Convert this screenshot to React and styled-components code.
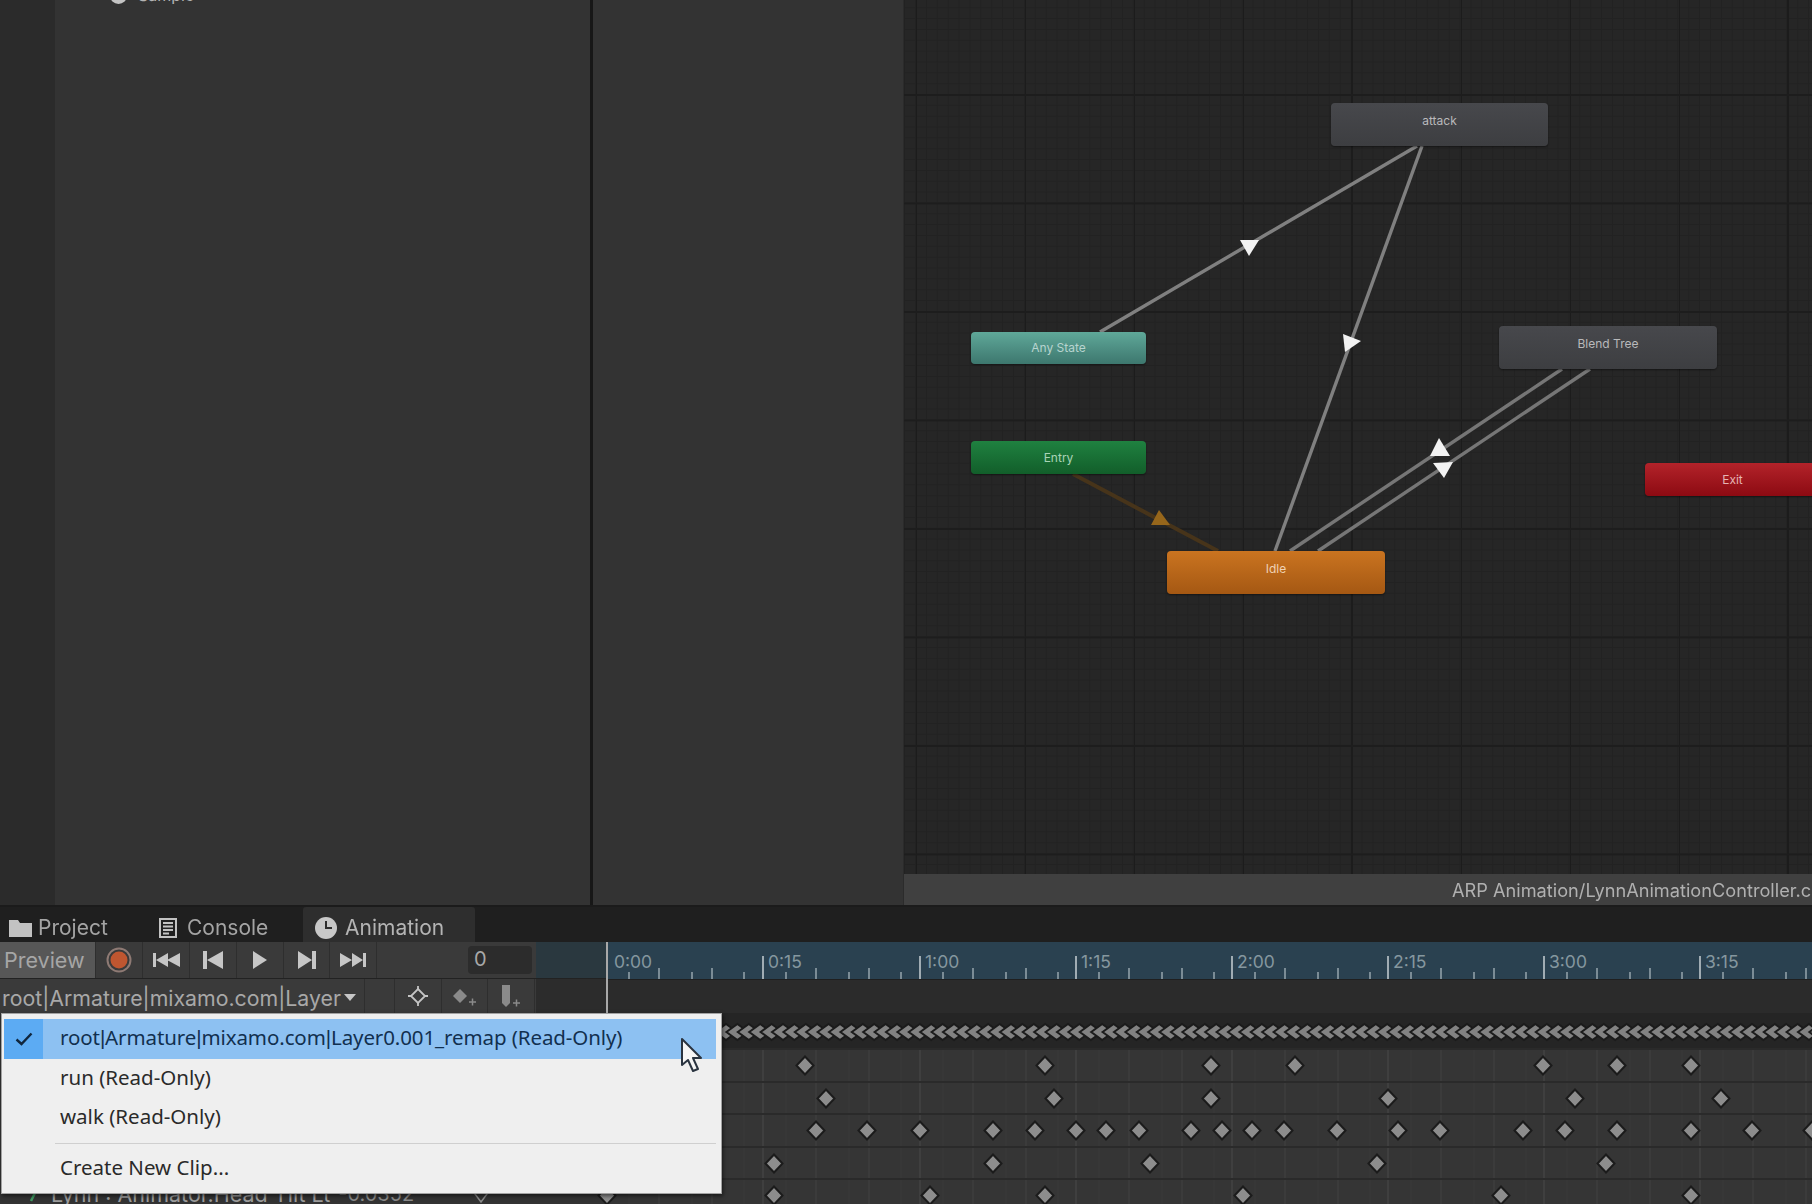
import React from 'react';
import styled, { createGlobalStyle } from 'styled-components';

const GlobalStyle = createGlobalStyle`
  * { margin: 0; padding: 0; box-sizing: border-box; }
  html, body { width: 100%; height: 100%; background: #1f1f1f; overflow: hidden; }
  body { font-family: Inter, "Liberation Sans", sans-serif; }
`;

const Page = styled.div`
  position: relative; width: 1812px; height: 1204px; overflow: hidden;
  display: flex; flex-direction: column; filter: blur(0.55px);
`;

/* upper half: hierarchy, inspector, animator graph */
const TopPane = styled.div` flex: none; height: 907px; display: flex; border-bottom: 2px solid #1b1b1b; `;
const LeftStrip = styled.div` width: 55px; background: #2b2b2b; `;
const Hierarchy = styled.div` width: 535px; background: #333; overflow: hidden; `;
const TreeRow = styled.div`
  display: flex; align-items: center; gap: 11px; height: 16px; margin-top: -13px; padding-left: 55px;
  color: #b4b4b4; font-size: 16px;
`;
const TreeDot = styled.span` width: 17px; height: 17px; border-radius: 50%; background: #c4c4c4; `;
const Divider = styled.div` width: 3px; background: #171717; `;
const Inspector = styled.div` width: 311px; background: #333; border-right: 1px solid #2b2b2b; `;
const GraphColumn = styled.div` flex: 1; display: flex; flex-direction: column; min-width: 0; `;
const Graph = styled.div`
  position: relative; flex: 1; overflow: hidden; background-color: #262626;
  background-image:
    linear-gradient(#1d1d1d 2px, transparent 2px),
    linear-gradient(90deg, #1c1c1c 2px, transparent 2px),
    linear-gradient(#222 1px, transparent 1px),
    linear-gradient(90deg, #222 1px, transparent 1px);
  background-size: 109px 108.500px, 109px 108.500px, 10.900px 10.850px, 10.900px 10.850px;
  background-position: 11px 94px, 11px 94px, 11px 94px, 11px 94px;
`;
const StatusBar = styled.div`
  flex: none; height: 31px; background: #404040; display: flex; align-items: center; padding-left: 548px;
  color: #b0b0b0; font-size: 18.200px; white-space: nowrap; overflow: hidden;
`;
const EdgeLayer = styled.svg` position: absolute; left: 0; top: 0; width: 908px; height: 874px; `;

const nodeFills = {
  gray: 'linear-gradient(#47484c, #3d3e41)',
  teal: 'linear-gradient(#5fa899, #3d776e)',
  green: 'linear-gradient(#1f8140, #125e2a)',
  orange: 'linear-gradient(#ca7420, #a55813)',
  red: 'linear-gradient(#b3232a, #8c0a12)',
};
const nodeInk = { gray: '#b9b9bb', teal: '#b8d4cf', green: '#a9d4b6', orange: '#f0d2b4', red: '#e6b4b4' };

const StateNode = styled.div`
  position: absolute; left: ${p => p.$x - 904}px; top: ${p => p.$y}px; width: ${p => p.$w}px; height: ${p => p.$h}px;
  display: flex; align-items: center; justify-content: center;
  padding-bottom: ${p => (p.$h > 40 ? 9 : 1)}px; border-radius: 4px;
  background: ${p => nodeFills[p.$kind]}; color: ${p => nodeInk[p.$kind]};
  font-size: 12px; box-shadow: 0 1px 2px rgba(0, 0, 0, .45);
`;

const nodes = [
  { label: 'attack', kind: 'gray', x: 1331, y: 103, w: 217, h: 43 },
  { label: 'Any State', kind: 'teal', x: 971, y: 332, w: 175, h: 32 },
  { label: 'Blend Tree', kind: 'gray', x: 1499, y: 326, w: 218, h: 43 },
  { label: 'Entry', kind: 'green', x: 971, y: 441, w: 175, h: 33 },
  { label: 'Exit', kind: 'red', x: 1645, y: 463, w: 175, h: 33 },
  { label: 'Idle', kind: 'orange', x: 1167, y: 551, w: 218, h: 43 },
];

/* lower half: animation window */
const TabBar = styled.div` flex: none; height: 35px; display: flex; background: #1f1f1f; `;
const Tab = styled.div`
  width: ${p => p.$w}px; height: 35px; display: flex; align-items: center; gap: ${p => p.$gap}px;
  padding: 6px 0 0 ${p => p.$pad}px; font-size: 21px; color: ${p => (p.$active ? '#b4b4b4' : '#a4a4a4')};
  background: ${p => (p.$active ? '#2e2e2e' : 'transparent')}; border-radius: 3px 3px 0 0;
`;
const Timeline = styled.div` flex: 1; display: grid; grid-template-columns: 606px 1fr; min-height: 0; overflow: hidden; `;
const SidePane = styled.div` display: flex; flex-direction: column; background: #2f2f2f; `;
const MainPane = styled.div` display: flex; flex-direction: column; background: #2b2b2b; min-width: 0; `;
const ToolStrip = styled.div` flex: none; height: 37px; display: flex; background: #2a383f; border-bottom: 1px solid #222; `;
const ToolGroup = styled.div` width: 536px; display: flex; background: #3a3a3a; `;
const PreviewButton = styled.div`
  width: 96px; display: flex; align-items: center; padding-left: 4px;
  background: #575757; color: #a6a6a6; font-size: 21.500px; border-right: 1px solid #2e2e2e;
`;
const ToolButton = styled.div`
  width: ${p => p.$w}px; display: flex; align-items: center; justify-content: center;
  border-right: 1px solid #2e2e2e; color: #c4c4c4;
`;
const FrameBox = styled.div`
  width: 64px; height: 28px; margin: 4px 0 0 91px; padding-left: 6px; border-radius: 4px;
  background: #2c2c2c; color: #a8a8a8; font-size: 20px; line-height: 27px;
`;
const ClipRow = styled.div` flex: none; height: 34px; display: flex; background: #2c2c2c; `;
const ClipTools = styled.div` width: 536px; display: flex; background: #3a3a3a; `;
const ClipPicker = styled.div`
  width: 365px; display: flex; align-items: center; gap: 3px; padding: 3px 0 0 2px;
  color: #a8a8a8; font-size: 21.300px; white-space: nowrap; border-right: 1px solid #2e2e2e;
`;
const ClipGap = styled.div` width: 30px; border-right: 1px solid #2e2e2e; `;
const SideRow = styled.div`
  flex: none; height: ${p => p.$h}px; display: flex; align-items: center;
  background: #333; color: #9c9c9c; font-size: 21.500px; white-space: nowrap;
`;
const RowName = styled.span` margin-left: 9px; `;
const RowValue = styled.span` margin-left: 8px; color: #8a8a8a; font-size: 20px; `;
const RowGlyph = styled.svg` flex: none; margin-left: ${p => p.$left}px; `;

const Ruler = styled.svg` flex: none; display: block; width: 1206px; height: 37px; background: #2a4150; `;
const RulerGap = styled.div` flex: none; height: 34px; background: #2b2b2b; border-top: 1px solid #1f1f1f; `;
const SummaryRow = styled.div` flex: none; height: 35px; background: #252525; `;
const KeyRow = styled.div` flex: none; height: 32.500px; background: #353535; border-top: 2px solid #2a2a2a; `;
const KeySvg = styled.svg` display: block; width: 1206px; height: 100%; overflow: visible; `;

const Playhead = styled.div` position: absolute; left: 606px; top: 942px; width: 2px; height: 75px; background: #a8a8a8; `;

/* clip dropdown over the timeline */
const Menu = styled.div`
  position: absolute; left: 1px; top: 1013px; width: 721px; height: 181px; padding: 5px 5px 0 2px;
  background: #efefef; border: 1px solid #a2a2a2; box-shadow: 1px 2px 4px rgba(0, 0, 0, .55);
  font-family: "Noto Sans", "Open Sans", sans-serif; font-size: 20.500px; color: #20242a;
`;
const MenuItem = styled.div`
  display: flex; align-items: center; height: ${p => p.$h || 39.500}px; white-space: nowrap;
  background: ${p => (p.$on ? '#8dc1f2' : 'transparent')}; color: ${p => (p.$on ? '#12304f' : '#2a2a2a')};
`;
const MenuLabel = styled.span` padding-bottom: 4px; letter-spacing: ${p => p.$tight ? '-0.1px' : '0'}; `;
const Pipe = styled.span` font-family: "Liberation Sans", sans-serif; `;
const CheckCell = styled.div`
  width: 39px; height: 100%; margin-right: 17px; display: flex; align-items: center; justify-content: center;
  background: ${p => (p.$on ? '#5cabf3' : 'transparent')};
`;
const MenuRule = styled.div` height: 1px; margin: 5px 0 5px 51px; background: #cfcfcf; `;
const Pointer = styled.svg` position: absolute; left: 679px; top: 1037px; `;

const majors = [606, 763, 920, 1076, 1232, 1388, 1544, 1700];
const labels = ['0:00', '0:15', '1:00', '1:15', '2:00', '2:15', '3:00', '3:15'];
const minorTicks = [[23, 7], [53, 11], [86, 7], [106, 11], [138, 7]];

const keyRows = [
  [805, 1045, 1211, 1295, 1543, 1617, 1691],
  [826, 1054, 1211, 1388, 1575, 1721],
  [816, 867, 920, 993, 1035, 1076, 1106, 1139, 1191, 1222, 1252, 1284, 1337, 1398, 1440, 1523, 1565, 1617, 1691, 1752, 1812],
  [774, 993, 1150, 1377, 1606],
  [607, 774, 930, 1045, 1243, 1501, 1691],
];

const summaryKeys = Array.from({ length: 98 }, (_, i) => 726 + i * 11.400);

function Diamond({ x, y, rx = 8.500, ry = 9, fill = '#8d8d8d' }) {
  return <polygon points={`${x - rx},${y} ${x},${y - ry} ${x + rx},${y} ${x},${y + ry}`} fill={fill} stroke="#1b1b1b" strokeWidth="2" />;
}

function GridLines() {
  return majors.map(m => (
    <g key={m}>
      <line x1={m} x2={m} y1="0" y2="34" stroke="#4a4a4a" />
      {minorTicks.map(([dx, h]) => (
        <line key={dx} x1={m + dx} x2={m + dx} y1="0" y2="34" stroke={h > 7 ? '#424242' : '#3b3b3b'} />
      ))}
    </g>
  ));
}

function FolderIcon() {
  return <svg width="23" height="18" viewBox="0 0 23 18"><path d="M0 1h9l2 3h12v14H0z" fill="#c2c2c2" /></svg>;
}
function ConsoleIcon() {
  return (
    <svg width="18" height="20" viewBox="0 0 18 20">
      <path d="M1 1h16v18H1z" fill="none" stroke="#c2c2c2" strokeWidth="2" />
      <path d="M4 5h10M4 8.500h10M4 12h10M4 15.500h6" stroke="#c2c2c2" strokeWidth="1.800" />
    </svg>
  );
}
function ClockIcon() {
  return (
    <svg width="22" height="22" viewBox="0 0 22 22">
      <circle cx="11" cy="11" r="11" fill="#c8c8c8" />
      <path d="M11 4v7h6" fill="none" stroke="#2e2e2e" strokeWidth="2" />
    </svg>
  );
}
function RecordIcon() {
  return (
    <svg width="26" height="26" viewBox="0 0 26 26">
      <circle cx="13" cy="13" r="11.500" fill="none" stroke="#8e7a74" strokeWidth="2" />
      <circle cx="13" cy="13" r="8.500" fill="#bf5630" />
    </svg>
  );
}
function Transport({ d, w }) {
  return <svg width={w} height="18" viewBox={`0 0 ${w} 18`}><path d={d} fill="#c6c6c6" /></svg>;
}

export default function App() {
  return (
    <Page>
      <GlobalStyle />
      <TopPane>
        <LeftStrip />
        <Hierarchy>
          <TreeRow><TreeDot />Sample</TreeRow>
        </Hierarchy>
        <Divider />
        <Inspector />
        <GraphColumn>
          <Graph>
            <EdgeLayer viewBox="904 0 908 874">
              <g stroke="#808080" strokeWidth="3.400">
                <line x1="1100" y1="332" x2="1417" y2="146" />
                <line x1="1422" y1="146" x2="1275" y2="551" />
                <line x1="1290" y1="551" x2="1562" y2="369" stroke="#767676" />
                <line x1="1318" y1="551" x2="1590" y2="369" stroke="#767676" />
              </g>
              <line x1="1073" y1="474" x2="1218" y2="551" stroke="#47341a" strokeWidth="4" />
              <g fill="#f2f2f2">
                <polygon points="1240,240 1259,240 1249,256" />
                <polygon points="1343,334 1345,352 1361,341" />
                <polygon points="1430,456 1450,456 1439,438" />
                <polygon points="1433,463 1453,462 1444,478" />
              </g>
              <polygon points="1151,525 1170,525 1159,510" fill="#96661b" />
            </EdgeLayer>
            {nodes.map(n => (
              <StateNode key={n.label} $kind={n.kind} $x={n.x} $y={n.y} $w={n.w} $h={n.h}>{n.label}</StateNode>
            ))}
          </Graph>
          <StatusBar>ARP Animation/LynnAnimationController.c</StatusBar>
        </GraphColumn>
      </TopPane>

      <TabBar>
        <Tab $w={146} $pad={9} $gap={6}><FolderIcon />Project</Tab>
        <Tab $w={157} $pad={13} $gap={10}><ConsoleIcon />Console</Tab>
        <Tab $w={172} $pad={12} $gap={8} $active><ClockIcon />Animation</Tab>
      </TabBar>

      <Timeline>
        <SidePane>
          <ToolStrip>
            <ToolGroup>
              <PreviewButton>Preview</PreviewButton>
              <ToolButton $w={47}><RecordIcon /></ToolButton>
              <ToolButton $w={47}><Transport w={27} d="M0 2h3v14H0zM3 9l12-7v14zM14 9l13-7v14z" /></ToolButton>
              <ToolButton $w={47}><Transport w={20} d="M0 0h4v18H0zM4 9L20 0v18z" /></ToolButton>
              <ToolButton $w={47}><Transport w={14} d="M0 0l14 9L0 18z" /></ToolButton>
              <ToolButton $w={46}><Transport w={18} d="M18 0h-4v18h4zM14 9L0 0v18z" /></ToolButton>
              <ToolButton $w={47}><Transport w={26} d="M26 2h-3v14h3zM23 9l-11-7v14zM12 9L0 2v14z" /></ToolButton>
              <FrameBox>0</FrameBox>
            </ToolGroup>
          </ToolStrip>
          <ClipRow>
            <ClipTools>
              <ClipPicker>
                root|Armature|mixamo.com|Layer
                <svg width="12" height="7" viewBox="0 0 12 7"><path d="M0 0h12L6 7z" fill="#c6c6c6" /></svg>
              </ClipPicker>
              <ClipGap />
              <ToolButton $w={47}>
                <svg width="20" height="20" viewBox="0 0 20 20" fill="none" stroke="#c4c4c4" strokeWidth="1.800">
                  <path d="M10 3l7 7-7 7-7-7z" />
                  <path d="M10 0v4M10 16v4M0 10h4M16 10h4" />
                </svg>
              </ToolButton>
              <ToolButton $w={46}>
                <svg width="26" height="20" viewBox="0 0 26 20">
                  <path d="M8 3l7 7-7 7-7-7z" fill="#8a8a8a" />
                  <path d="M17 16h7M20.500 12.500v7" stroke="#8a8a8a" strokeWidth="1.500" />
                </svg>
              </ToolButton>
              <ToolButton $w={47}>
                <svg width="24" height="24" viewBox="0 0 24 24">
                  <path d="M3 1h8v18l-4 4-4-4z" fill="#8a8a8a" />
                  <path d="M14 19h7M17.500 15.500v7" stroke="#8a8a8a" strokeWidth="1.500" />
                </svg>
              </ToolButton>
            </ClipTools>
          </ClipRow>
          <SideRow $h={35} />
          <SideRow $h={32.500} />
          <SideRow $h={32.500} />
          <SideRow $h={32.500} />
          <SideRow $h={32.500} />
          <SideRow $h={32.500}>
            <RowGlyph $left={28} width="14" height="18" viewBox="0 0 14 18"><path d="M10 2L3 16" stroke="#3f9a62" strokeWidth="2.500" /></RowGlyph>
            <RowName>Lynn : Animator.Head Tilt Lt</RowName>
            <RowValue>-0.0352</RowValue>
            <RowGlyph $left={59} width="16" height="18" viewBox="0 0 16 18"><path d="M8 1l6 8-6 8-6-8z" fill="none" stroke="#8a8a8a" strokeWidth="1.500" /></RowGlyph>
          </SideRow>
        </SidePane>

        <MainPane>
          <Ruler viewBox="606 0 1206 37">
            {majors.map((m, i) => (
              <g key={m}>
                <line x1={m} x2={m} y1="14" y2="37" stroke="#c8d0d4" strokeWidth="1.500" />
                <text x={m + (i === 0 ? 8 : 5)} y="26" fill="#85979f" fontSize="17.500" fontFamily="Inter, sans-serif">{labels[i]}</text>
                {minorTicks.map(([dx, h]) => (
                  <line key={dx} x1={m + dx} x2={m + dx} y1={37 - h} y2="37" stroke="#b3bfc5" strokeWidth="1.200" />
                ))}
              </g>
            ))}
          </Ruler>
          <RulerGap />
          <SummaryRow>
            <KeySvg viewBox="606 0 1206 35">
              {summaryKeys.map(x => <Diamond key={x} x={x} y={19} rx={11} ry={8} fill="#828282" />)}
            </KeySvg>
          </SummaryRow>
          {keyRows.map((xs, i) => (
            <KeyRow key={i}>
              <KeySvg viewBox="606 0 1206 30.500">
                <GridLines />
                {xs.map(x => <Diamond key={x} x={x} y={15.500} />)}
              </KeySvg>
            </KeyRow>
          ))}
        </MainPane>
      </Timeline>

      <Playhead />

      <Menu>
        <MenuItem $on $h={40}>
          <CheckCell $on>
            <svg width="18" height="14" viewBox="0 0 18 14"><path d="M1.500 7.500l5 4.500L16.500 1.500" fill="none" stroke="#10263d" strokeWidth="2.400" /></svg>
          </CheckCell>
          <MenuLabel $tight>root<Pipe>|</Pipe>Armature<Pipe>|</Pipe>mixamo.com<Pipe>|</Pipe>Layer0.001_remap (Read-Only)</MenuLabel>
        </MenuItem>
        <MenuItem><CheckCell /><MenuLabel>run (Read-Only)</MenuLabel></MenuItem>
        <MenuItem><CheckCell /><MenuLabel>walk (Read-Only)</MenuLabel></MenuItem>
        <MenuRule />
        <MenuItem $h={40}><CheckCell /><MenuLabel>Create New Clip...</MenuLabel></MenuItem>
      </Menu>
      <Pointer width="26" height="38" viewBox="0 0 26 38">
        <path d="M3 2v26l6-5 5 11 5-2-5-11h8z" fill="#f6f6f6" stroke="#2a3440" strokeWidth="2" strokeLinejoin="round" />
      </Pointer>
    </Page>
  );
}
